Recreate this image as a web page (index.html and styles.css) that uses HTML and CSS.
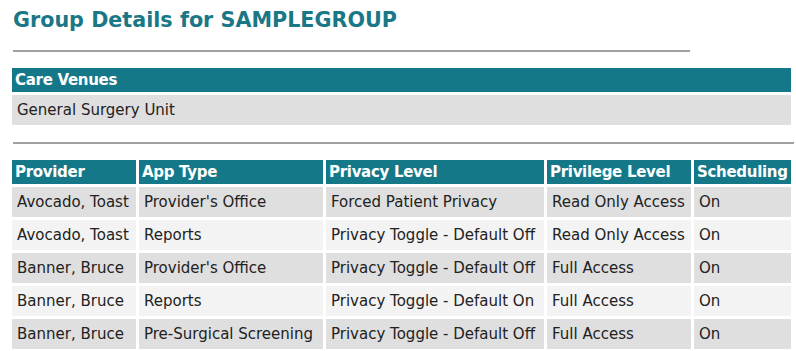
FILE: index.html
```html
<!DOCTYPE html>
<html lang="en">
<head>
    <meta charset="UTF-8">
    <meta name="viewport" content="width=device-width, initial-scale=1.0">
    <title>Group Details</title>
    <link rel="stylesheet" href="styles.css">
</head>
<body>
    <h1 class="page-title">Group Details for SAMPLEGROUP</h1>
    <hr class="rule rule-short">

    <table class="grid">
        <tr><th>Care Venues</th></tr>
        <tr class="odd"><td>General Surgery Unit</td></tr>
    </table>

    <hr class="rule">

    <table class="grid grid-fixed">
        <tr>
            <th class="col-provider">Provider</th>
            <th class="col-app">App Type</th>
            <th class="col-privacy">Privacy Level</th>
            <th class="col-privilege">Privilege Level</th>
            <th>Scheduling</th>
        </tr>
        <tr class="odd">
            <td>Avocado, Toast</td>
            <td>Provider's Office</td>
            <td>Forced Patient Privacy</td>
            <td>Read Only Access</td>
            <td>On</td>
        </tr>
        <tr class="even">
            <td>Avocado, Toast</td>
            <td>Reports</td>
            <td>Privacy Toggle - Default Off</td>
            <td>Read Only Access</td>
            <td>On</td>
        </tr>
        <tr class="odd">
            <td>Banner, Bruce</td>
            <td>Provider's Office</td>
            <td>Privacy Toggle - Default Off</td>
            <td>Full Access</td>
            <td>On</td>
        </tr>
        <tr class="even">
            <td>Banner, Bruce</td>
            <td>Reports</td>
            <td>Privacy Toggle - Default On</td>
            <td>Full Access</td>
            <td>On</td>
        </tr>
        <tr class="odd">
            <td>Banner, Bruce</td>
            <td>Pre-Surgical Screening</td>
            <td>Privacy Toggle - Default Off</td>
            <td>Full Access</td>
            <td>On</td>
        </tr>
    </table>
</body>
</html>
```

FILE: styles.css
```css
body {
    font-family: "DejaVu Sans", Verdana, sans-serif;
    font-size: 15px;
    color: #222;
    margin: 8px 2px 0 9px;
    background: #fff;
}
.page-title {
    font-size: 20.7px;
    font-weight: bold;
    color: #1a7886;
    margin: 0 0 0 4px;
    line-height: 24px;
}
.rule {
    border: 0;
    border-top: 2px solid #a0a0a0;
    margin: 14px 0 13px 4px;
}
.rule-short {
    width: 677px;
    margin-top: 18px;
}
.grid {
    width: 100%;
    border-collapse: separate;
    border-spacing: 3px;
    margin: 0;
}
.grid-fixed {
    table-layout: fixed;
}
.grid th {
    background: #147889;
    color: #fff;
    text-align: left;
    font-weight: bold;
    letter-spacing: -0.3px;
    padding: 0 3px;
    height: 24px;
    white-space: nowrap;
    overflow: hidden;
}
.grid td {
    padding: 0 5px;
    height: 30px;
    white-space: nowrap;
}
.odd td {
    background: #dfdfdf;
}
.even td {
    background: #f3f3f3;
}
.col-provider { width: 118px; }
.col-app { width: 178px; }
.col-privacy { width: 212px; }
.col-privilege { width: 138px; }
```
